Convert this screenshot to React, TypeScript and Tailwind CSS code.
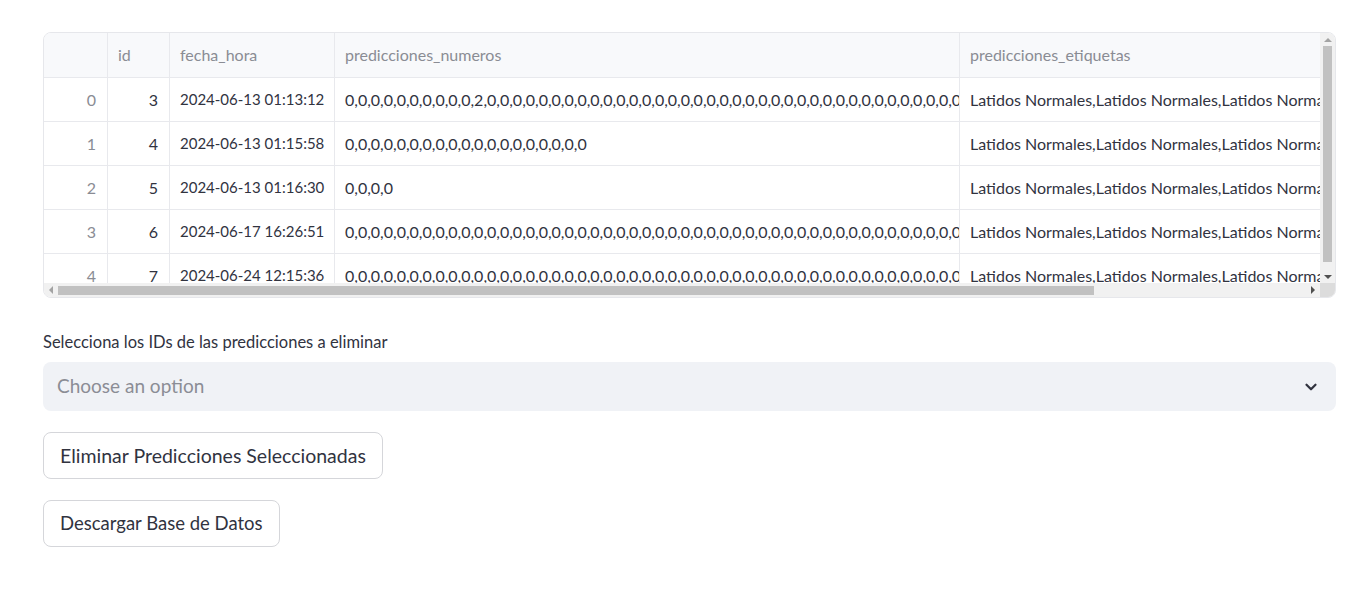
import { ChevronDown } from "lucide-react";

const zeros = (n: number) => Array(n).fill("0").join(",");

const labels = Array(4).fill("Latidos Normales").join(",");

const rows = [
  { idx: 0, id: 3, fecha: "2024-06-13 01:13:12", nums: zeros(10) + ",2," + zeros(50) },
  { idx: 1, id: 4, fecha: "2024-06-13 01:15:58", nums: zeros(19) },
  { idx: 2, id: 5, fecha: "2024-06-13 01:16:30", nums: zeros(4) },
  { idx: 3, id: 6, fecha: "2024-06-17 16:26:51", nums: zeros(60) },
  { idx: 4, id: 7, fecha: "2024-06-24 12:15:36", nums: zeros(60) },
];

const cell = "shrink-0 h-full flex items-center border-r border-[#e8e9ed] overflow-hidden whitespace-nowrap";

function DataTable() {
  return (
    <div className="w-[1293px] h-[266px] rounded-lg border border-[#e6e7eb] overflow-hidden flex flex-col">
      <div className="flex h-[250px]">
        <div className="w-[1277px] overflow-hidden">
          <div className="w-[1700px]">
            <div className="flex h-[45px] bg-[#f8f9fb] border-b border-[#e8e9ed] text-[16px] text-[#8a8c94]">
              <div className={`${cell} w-[64px]`} />
              <div className={`${cell} w-[62px] px-[10px]`}>id</div>
              <div className={`${cell} w-[165px] px-[10px]`}>fecha_hora</div>
              <div className={`${cell} w-[625px] px-[10px]`}>predicciones_numeros</div>
              <div className={`${cell} w-[420px] px-[10px]`}>predicciones_etiquetas</div>
            </div>
            {rows.map((r) => (
              <div key={r.idx} className="flex h-[44px] border-b border-[#e8e9ed] text-[16px] text-[#31333f]">
                <div className={`${cell} w-[64px] justify-end px-[11px] text-[#8a8c94]`}>{r.idx}</div>
                <div className={`${cell} w-[62px] justify-end px-[11px]`}>{r.id}</div>
                <div className={`${cell} w-[165px] px-[10px] text-[15px]`}>{r.fecha}</div>
                <div className={`${cell} w-[625px] px-[10px]`}>{r.nums}</div>
                <div className={`${cell} w-[420px] px-[10px]`}>{labels}</div>
              </div>
            ))}
          </div>
        </div>
        {/* vertical scrollbar */}
        <div className="w-[15px] bg-[#f1f1f1] flex flex-col items-center">
          <div className="h-[13px] flex items-center justify-center">
            <div className="w-0 h-0 border-x-[4px] border-x-transparent border-b-[4px] border-b-[#a3a3a3]" />
          </div>
          <div className="w-[9px] h-[216px] bg-[#c1c1c1]" />
          <div className="flex-1" />
          <div className="h-[13px] flex items-center justify-center">
            <div className="w-0 h-0 border-x-[4px] border-x-transparent border-t-[4px] border-t-[#505050]" />
          </div>
        </div>
      </div>
      {/* horizontal scrollbar */}
      <div className="flex h-[15px] bg-[#f1f1f1]">
        <div className="w-[1277px] flex items-center">
          <div className="w-[14px] flex items-center justify-center">
            <div className="w-0 h-0 border-y-[4px] border-y-transparent border-r-[4px] border-r-[#a3a3a3]" />
          </div>
          <div className="w-[1036px] h-[9px] bg-[#c1c1c1]" />
          <div className="flex-1" />
          <div className="w-[14px] flex items-center justify-center">
            <div className="w-0 h-0 border-y-[4px] border-y-transparent border-l-[4px] border-l-[#505050]" />
          </div>
        </div>
        <div className="w-[15px] bg-[#dcdcdc]" />
      </div>
    </div>
  );
}

export default function App() {
  return (
    <div className="min-h-screen bg-white pl-[43px] pt-[32px] text-[#31333f]" style={{ fontFamily: "Lato, 'Noto Sans', sans-serif" }}>
      <DataTable />
      <div className="mt-[34px] text-[16.5px] leading-5">Selecciona los IDs de las predicciones a eliminar</div>
      <div className="mt-[10px] w-[1293px] h-[49px] rounded-lg bg-[#f0f2f6] flex items-center justify-between pl-[14px] pr-[16px]">
        <span className="text-[19px] text-[#8b8d95]">Choose an option</span>
        <ChevronDown size={18} strokeWidth={3} className="text-[#31333f]" />
      </div>
      <button className="mt-[21px] h-[47px] px-[16px] rounded-lg border border-[#d5d6da] bg-white text-[19.5px] text-[#31333f] block">
        Eliminar Predicciones Seleccionadas
      </button>
      <button className="mt-[21px] h-[47px] px-[16px] rounded-lg border border-[#d5d6da] bg-white text-[18.5px] text-[#31333f] block">
        Descargar Base de Datos
      </button>
    </div>
  );
}
